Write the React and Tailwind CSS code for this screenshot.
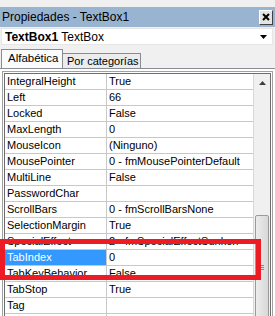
import React from 'react';

const rows = [
  ['IntegralHeight', 'True'],
  ['Left', '66'],
  ['Locked', 'False'],
  ['MaxLength', '0'],
  ['MouseIcon', '(Ninguno)'],
  ['MousePointer', '0 - fmMousePointerDefault'],
  ['MultiLine', 'False'],
  ['PasswordChar', ''],
  ['ScrollBars', '0 - fmScrollBarsNone'],
  ['SelectionMargin', 'True'],
  ['SpecialEffect', '2 - fmSpecialEffectSunken'],
  ['TabIndex', '0'],
  ['TabKeyBehavior', 'False'],
  ['TabStop', 'True'],
  ['Tag', ''],
  ['', ''],
];

export default function App() {
  return (
    <div className="relative w-[275px] h-[316px] overflow-hidden bg-[#f0f0f0] font-['Liberation_Sans',Arial,sans-serif] text-black">
      <div className="h-[7px]" />
      {/* title bar */}
      <div className="flex h-[20px] items-center justify-between bg-[#99b4d1] pl-[2px] pr-[2px]">
        <span className="text-[12px] leading-none">Propiedades - TextBox1</span>
        <div className="flex h-[15px] w-[14px] items-center justify-center border border-t-white border-l-white border-r-[#404040] border-b-[#404040] bg-[#e4e4e4]">
          <svg width="8" height="8" viewBox="0 0 8 8">
            <path d="M1 1 L7 7 M7 1 L1 7" stroke="#000" strokeWidth="2" />
          </svg>
        </div>
      </div>
      {/* object combo */}
      <div className="ml-[1px] mt-[1px] flex h-[17px] w-[272px] items-center justify-between border border-[#e6e6e6] bg-white pl-[3px] pr-[5px] text-[12px]">
        <span>
          <b>TextBox1</b> TextBox
        </span>
        <svg width="7" height="4" viewBox="0 0 7 4">
          <path d="M0 0 H7 L3.5 4 Z" fill="#000" />
        </svg>
      </div>
      {/* tabs */}
      <div className="mt-[4px] flex h-[19px] items-end pl-[1px] text-[11px]">
        <div className="relative z-10 flex h-[19px] w-[62px] items-center whitespace-nowrap border border-b-0 border-[#898c95] bg-[#fbfbfb] pl-[6px] text-[11.5px]">
          Alfabética
        </div>
        <div className="flex h-[15px] w-[78px] items-center whitespace-nowrap border border-l-0 border-b-0 border-[#898c95] bg-[#ececec] pl-[4px]">
          Por categorías
        </div>
      </div>
      {/* tab panel */}
      <div className="relative h-[260px] border-t border-[#898c95] bg-white pt-[2px]">
        <div className="ml-[2px] w-[271px] border border-[#a0a0a0] bg-white p-px">
          <div className="flex border border-[#6d6d6d]">
            <div className="w-[248px] text-[11px]">
              {rows.map(([name, value], i) => {
                const selected = name === 'TabIndex';
                return (
                  <div key={i} className="flex h-[16px] border-b border-[#c8c8c8]">
                    <div
                      className={`flex w-[102px] items-center whitespace-nowrap border-r border-[#c8c8c8] pl-[2px] ${
                        selected ? 'bg-[#3399ff] text-white' : ''
                      }`}
                    >
                      {name}
                    </div>
                    <div className="flex flex-1 items-center whitespace-nowrap pl-[2px]">{value}</div>
                  </div>
                );
              })}
            </div>
            {/* scrollbar */}
            <div className="relative w-[17px] border-l border-[#d8d8d8] bg-[#f0f0f0]">
              <div className="flex h-[17px] items-center justify-center">
                <svg width="7" height="4" viewBox="0 0 7 4">
                  <path d="M3.5 0 L7 4 H0 Z" fill="#404040" />
                </svg>
              </div>
              <div className="ml-px mt-[124px] flex h-[120px] w-[14px] flex-col items-center rounded-[2px] border border-[#9a9a9a] bg-gradient-to-r from-[#ececec] to-[#d8d8d8] pt-[49px]">
                <div className="flex flex-col gap-px">
                  <div className="h-px w-[4px] bg-[#888]" />
                  <div className="h-px w-[4px] bg-[#888]" />
                  <div className="h-px w-[4px] bg-[#888]" />
                </div>
              </div>
            </div>
          </div>
        </div>
      </div>
      {/* highlight box */}
      <div className="absolute left-0 top-[239px] h-[41px] w-[261px] border-[5px] border-[#ed1c24]" />
    </div>
  );
}
